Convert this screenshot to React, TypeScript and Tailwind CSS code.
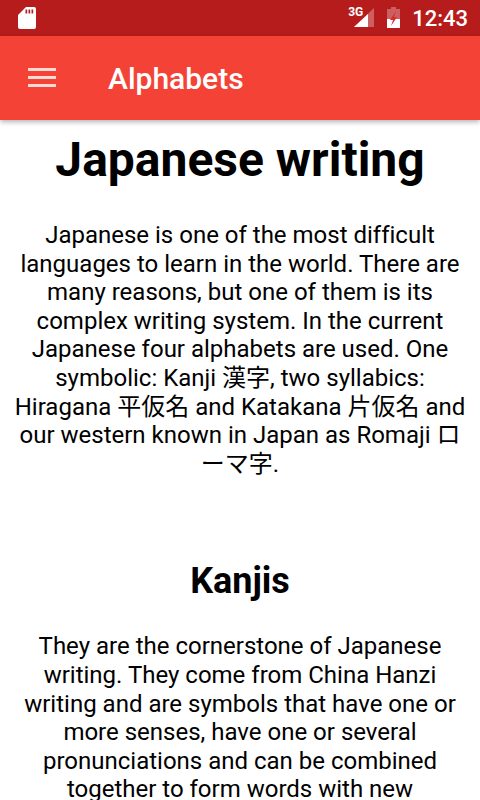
import React from "react";

const para1 =
  "Japanese is one of the most difficult languages to learn in the world. There are many reasons, but one of them is its complex writing system. In the current Japanese four alphabets are used. One symbolic: Kanji 漢字, two syllabics: Hiragana 平仮名 and Katakana 片仮名 and our western known in Japan as Romaji ローマ字.";

const para2 =
  "They are the cornerstone of Japanese writing. They come from China Hanzi writing and are symbols that have one or more senses, have one or several pronunciations and can be combined together to form words with new";

const StatusBar = () => (
  <div className="h-9 shrink-0 bg-[#b71c1c] flex items-center justify-between pl-[18px] pr-3">
    <svg width="18" height="22" viewBox="0 0 18 22">
      <path
        fill="#fff"
        fillRule="evenodd"
        d="M8 0h8a2 2 0 0 1 2 2v18a2 2 0 0 1-2 2H2a2 2 0 0 1-2-2V8zM7.5 2.5v4h1.7v-4zM10.5 2.5v4h1.7v-4zM13.5 2.5v4h1.7v-4z"
      />
    </svg>
    <div className="flex items-center">
      <div className="relative w-[27px] h-[22px]">
        <span className="absolute left-[1px] top-[-1px] text-[12px] leading-[12px] font-bold text-white">3G</span>
        <svg width="20" height="19" viewBox="0 0 20 19" className="absolute right-0 top-[1px]">
          <path fill="#fff" fillOpacity="0.3" d="M20 0v19H0z" />
          <path fill="#fff" d="M14 6v13H0z" />
        </svg>
      </div>
      <svg width="13" height="21" viewBox="0 0 13 21" className="ml-[13px] mt-[-1px]">
        <path fill="#fff" fillOpacity="0.3" d="M4 0h5v2h4v19H0V2h4z" />
        <path fill="#fff" d="M0 12h13v9H0z" />
        <path fill="#d32f2f" d="M9 4 3 13h3l-2 6 6-9H7z" />
      </svg>
      <span className="ml-3 mt-[1px] text-[22px] leading-none font-medium text-white">12:43</span>
    </div>
  </div>
);

const Toolbar = () => (
  <div className="h-[84px] shrink-0 bg-[#f44336] flex items-center shadow-[0_2px_5px_rgba(0,0,0,0.3)] relative pl-7">
    <div className="w-7 flex flex-col gap-[5px] mt-[-1px]">
      <div className="h-[3px] bg-[#ffd9d6]" />
      <div className="h-[3px] bg-[#ffd9d6]" />
      <div className="h-[3px] bg-[#ffd9d6]" />
    </div>
    <span className="ml-[52px] text-[30px] font-medium text-white">Alphabets</span>
  </div>
);

export default function App() {
  return (
    <div
      className="w-[480px] h-[800px] overflow-hidden bg-white flex flex-col text-black [font-variant-ligatures:none]"
      style={{ fontFamily: 'Roboto, "Noto Sans CJK JP", sans-serif' }}
    >
      <StatusBar />
      <Toolbar />
      <main className="px-3 text-center">
        <h1 className="text-[48px] leading-[56px] font-bold mt-3">Japanese writing</h1>
        <p className="mt-[33px] text-[24px] leading-[28.6px]">{para1}</p>
        <h2 className="mt-[82px] text-[36px] leading-[42px] font-bold">Kanjis</h2>
        <p className="mt-[30px] text-[24px] leading-[28.6px]">{para2}</p>
      </main>
    </div>
  );
}
